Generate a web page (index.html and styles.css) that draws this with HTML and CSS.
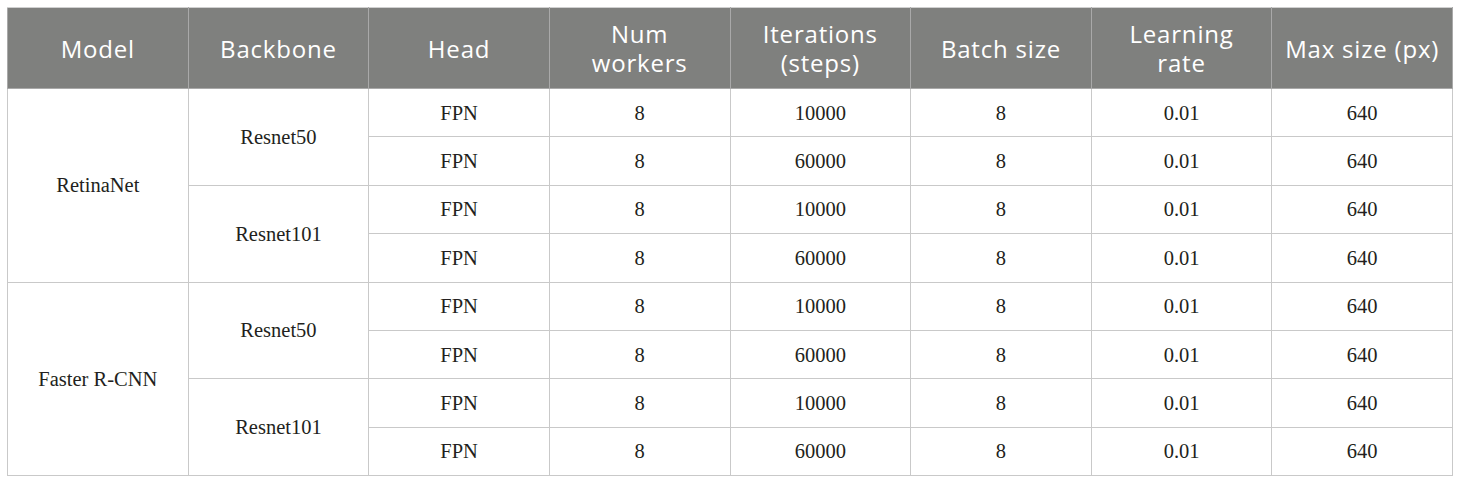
FILE: index.html
```html
<!DOCTYPE html>
<html>
<head>
<meta charset="utf-8">
<link rel="stylesheet" href="styles.css">
</head>
<body>
<table class="tbl">
<thead>
<tr class="head">
<th>Model</th><th>Backbone</th><th>Head</th><th>Num<br>workers</th><th>Iterations<br>(steps)</th><th>Batch size</th><th>Learning<br>rate</th><th>Max size (px)</th>
</tr>
</thead>
<tbody>
<tr><td rowspan="4">RetinaNet</td><td rowspan="2">Resnet50</td><td>FPN</td><td>8</td><td>10000</td><td>8</td><td>0.01</td><td>640</td></tr>
<tr><td>FPN</td><td>8</td><td>60000</td><td>8</td><td>0.01</td><td>640</td></tr>
<tr><td rowspan="2">Resnet101</td><td>FPN</td><td>8</td><td>10000</td><td>8</td><td>0.01</td><td>640</td></tr>
<tr><td>FPN</td><td>8</td><td>60000</td><td>8</td><td>0.01</td><td>640</td></tr>
<tr><td rowspan="4">Faster R-CNN</td><td rowspan="2">Resnet50</td><td>FPN</td><td>8</td><td>10000</td><td>8</td><td>0.01</td><td>640</td></tr>
<tr><td>FPN</td><td>8</td><td>60000</td><td>8</td><td>0.01</td><td>640</td></tr>
<tr><td rowspan="2">Resnet101</td><td>FPN</td><td>8</td><td>10000</td><td>8</td><td>0.01</td><td>640</td></tr>
<tr><td>FPN</td><td>8</td><td>60000</td><td>8</td><td>0.01</td><td>640</td></tr>
</tbody>
</table>
</body>
</html>
```
FILE: styles.css
```css
html, body {
  margin: 0;
  padding: 0;
  background: #ffffff;
}
body {
  padding: 7px 7px;
}
.tbl {
  width: 1446px;
  table-layout: fixed;
  border-collapse: collapse;
  font-family: "Liberation Serif", "Times New Roman", serif;
  color: #231f20;
}
.tbl th,
.tbl td {
  border: 1px solid #c9c9c9;
  text-align: center;
  vertical-align: middle;
  padding: 0;
}
.head th {
  height: 80px;
  background: #7f807e;
  color: #ffffff;
  font-family: "Open Sans", "DejaVu Sans", sans-serif;
  font-weight: 400;
  font-size: 24px;
  line-height: 29px;
  letter-spacing: 0.8px;
  border-color: #a9a9a9;
  border-top-color: #d0d0d0;
}
.tbl td {
  height: 47.4px;
  font-size: 20.5px;
  line-height: 22px;
}
```
